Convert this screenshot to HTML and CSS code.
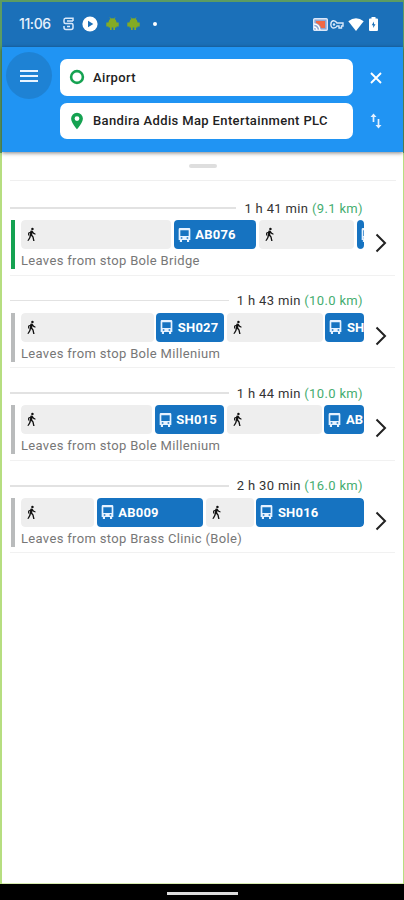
FILE: index.html
```html
<!DOCTYPE html>
<html lang="en">
<head>
<meta charset="utf-8">
<meta name="viewport" content="width=device-width, initial-scale=1">
<title>Routes</title>
<link rel="stylesheet" href="styles.css">
</head>
<body>
<svg class="defs" aria-hidden="true">
  <symbol id="walk" viewBox="0 0 24 24"><path d="M13.500 5.200a2 2 0 1 0 0-4 2 2 0 0 0 0 4zM10 7.500L6.500 9v4.500h1.800V10.200l1.500-.6-1.500 7-3 5.400h2.300l2.800-5 .8-3 2.200 2.500 1.300 6h2.200l-1.500-7-2.300-3 .6-3.200 1.200 1.700 3.400 1.200v-2l-2.400-1-2-2.700q-1.400-1.600-3.600-.5z"/></symbol>
  <symbol id="bus" viewBox="0 0 14 15"><path fill-rule="evenodd" d="M2 0h10Q13.300 0 13.300 1.500V13H12v2H9.700v-2H4.300v2H2v-2H.7V1.500Q.7 0 2 0zM2.500 2.500V8.500h9V2.500zM3 10v1.500h1.700V10zM9.300 10v1.500H11V10z"/></symbol>
  <symbol id="android" viewBox="0 0 13 14"><path d="M2.500 5Q3 2.700 4.300 2L3.500.5l.5-.2.900 1.300q1.600-.5 3.200 0L9 .3l.5.2L8.700 2Q10 2.700 10.500 5v.5h2.200v4h-2.200v1H9V13H7.300v-2.500H5.700V13H4v-2.500H2.500v-1H.3v-4h2.200z"/></symbol>
</svg>
<div class="phone">
  <div class="status">
    <span class="clock">11:06</span>
    <svg class="s-icon" width="11" height="14" viewBox="0 0 11 14"><path d="M10 4V1.200H2.500Q1 1.200 1 3v2Q1 6.500 2.500 6.500h6Q10 6.500 10 8v2.500q0 2-2 2H3q-2 0-2-2V9M4 4h6M4 9.500h3" fill="none" stroke="#d9e8fa" stroke-width="1.500"/></svg>
    <svg class="play" width="16" height="16" viewBox="0 0 16 16"><circle cx="8" cy="8" r="7.600" fill="#fff"/><path d="M6 4.700v6.600L11.300 8z" fill="#1b70b9"/></svg>
    <svg class="droid" width="13" height="14"><use href="#android"/></svg>
    <svg class="droid second" width="13" height="14"><use href="#android"/></svg>
    <span class="dot"></span>
    <svg class="cast" width="15" height="13" viewBox="0 0 15 13"><rect x=".7" y=".7" width="13.600" height="11.600" rx="1" fill="#8ca6d4" stroke="#dce7f8" stroke-width="1.400"/><path d="M3 3h9v7H8Q7 6 3 5z" fill="#ef6845"/><path d="M1 6q5 0 6 6M1 9q2.500 0 3 3" fill="none" stroke="#fff" stroke-width="1.300"/></svg>
    <svg class="key" width="14" height="9" viewBox="0 0 14 9"><path d="M7 3Q5.500.7 3.500.8 1 1 .8 4.500 1 8 3.800 8 6 8 7 6h2v2h2.500V6H13V3z" fill="none" stroke="#d9e8fa" stroke-width="1.400"/><circle cx="4" cy="4.500" r="1.200" fill="#d9e8fa"/></svg>
    <svg class="wifi" width="16" height="13" viewBox="0 0 16 13"><path d="M.3 3.200Q8-2.600 15.700 3.200L8 13z" fill="#fff"/></svg>
    <svg class="battery" width="9" height="14" viewBox="0 0 9 14"><path d="M2.500 0h4v1.500H8q1 0 1 1v10.500q0 1-1 1H1q-1 0-1-1V2.500q0-1 1-1h1.500z" fill="#fff"/><path d="M5 4.500L2.700 8.300h1.500V11l2.300-3.700H5z" fill="#1b70b9"/></svg>
  </div>
  <header class="search">
    <button class="menu" aria-label="Menu"><span></span><span></span><span></span></button>
    <div class="fields">
      <div class="field">
        <svg width="16" height="16" viewBox="0 0 16 16"><circle cx="8" cy="8" r="5.900" fill="none" stroke="#15a251" stroke-width="2.600"/></svg>
        <span class="from">Airport</span>
      </div>
      <div class="field">
        <svg width="16" height="18" viewBox="0 0 16 18"><path fill-rule="evenodd" d="M8 .7a5.900 5.900 0 0 0-5.900 5.900C2.100 11 8 17.300 8 17.300S13.900 11 13.900 6.600A5.900 5.900 0 0 0 8 .7zm0 3.500a2.400 2.400 0 1 1 0 4.800 2.400 2.400 0 0 1 0-4.800z" fill="#15a251"/></svg>
        <span class="to">Bandira Addis Map Entertainment PLC</span>
      </div>
    </div>
    <div class="actions">
      <svg width="14" height="14" viewBox="0 0 14 14"><path d="M2 2l10 10M12 2L2 12" stroke="#fff" stroke-width="1.900" fill="none"/></svg>
      <svg width="14" height="18" viewBox="0 0 14 18"><path d="M4.500 3v7M9.500 7v7" stroke="#e3f1ff" stroke-width="1.700"/><path d="M1.500 5l3-3.500 3 3.500zM6.500 13l3 3.500 3-3.500z" fill="#e3f1ff"/></svg>
    </div>
  </header>
  <div class="handle"><span></span></div>
  <main>
    <article class="route best">
      <div class="summary"><i></i><span>1 h 41 min <b>(9.1 km)</b></span></div>
      <div class="legs">
        <div class="leg walk" style="width:150px"><svg><use href="#walk"/></svg></div>
        <div class="leg bus" style="width:82px"><svg><use href="#bus"/></svg><span>AB076</span></div>
        <div class="leg walk" style="width:95.500px"><svg><use href="#walk"/></svg></div>
        <div class="leg bus" style="width:80px"><svg><use href="#bus"/></svg></div>
      </div>
      <p class="stop">Leaves from stop Bole Bridge</p>
      <svg class="chevron" viewBox="0 0 12 20"><path d="M1.500 1.500L10 10l-8.500 8.500"/></svg>
    </article>
    <article class="route">
      <div class="summary"><i></i><span>1 h 43 min <b>(10.0 km)</b></span></div>
      <div class="legs">
        <div class="leg walk" style="width:132.500px"><svg><use href="#walk"/></svg></div>
        <div class="leg bus" style="width:67.500px"><svg><use href="#bus"/></svg><span>SH027</span></div>
        <div class="leg walk" style="width:96px"><svg><use href="#walk"/></svg></div>
        <div class="leg bus" style="width:80px"><svg><use href="#bus"/></svg><span>SH</span></div>
      </div>
      <p class="stop">Leaves from stop Bole Millenium</p>
      <svg class="chevron" viewBox="0 0 12 20"><path d="M1.500 1.500L10 10l-8.500 8.500"/></svg>
    </article>
    <article class="route">
      <div class="summary"><i></i><span>1 h 44 min <b>(10.0 km)</b></span></div>
      <div class="legs">
        <div class="leg walk" style="width:131px"><svg><use href="#walk"/></svg></div>
        <div class="leg bus" style="width:69px"><svg><use href="#bus"/></svg><span>SH015</span></div>
        <div class="leg walk" style="width:95px"><svg><use href="#walk"/></svg></div>
        <div class="leg bus" style="width:80px"><svg><use href="#bus"/></svg><span>AB</span></div>
      </div>
      <p class="stop">Leaves from stop Bole Millenium</p>
      <svg class="chevron" viewBox="0 0 12 20"><path d="M1.500 1.500L10 10l-8.500 8.500"/></svg>
    </article>
    <article class="route">
      <div class="summary"><i></i><span>2 h 30 min <b>(16.0 km)</b></span></div>
      <div class="legs">
        <div class="leg walk" style="width:73px"><svg><use href="#walk"/></svg></div>
        <div class="leg bus" style="width:106px"><svg><use href="#bus"/></svg><span>AB009</span></div>
        <div class="leg walk" style="width:48px"><svg><use href="#walk"/></svg></div>
        <div class="leg bus" style="width:108px"><svg><use href="#bus"/></svg><span>SH016</span></div>
      </div>
      <p class="stop">Leaves from stop Brass Clinic (Bole)</p>
      <svg class="chevron" viewBox="0 0 12 20"><path d="M1.500 1.500L10 10l-8.500 8.500"/></svg>
    </article>
  </main>
  <footer><span></span></footer>
</div>
</body>
</html>
```
FILE: styles.css
```css
* { box-sizing: border-box; }
body { margin: 0; font-family: Roboto, "Liberation Sans", sans-serif; }
svg { display: block; flex: none; }
.defs { position: absolute; width: 0; height: 0; }
.phone {
  width: 404px; height: 900px; overflow: hidden;
  display: flex; flex-direction: column;
  background: linear-gradient(#5c9c62 0 153px, #b6de80 153px);
}
.status {
  height: 45px; margin: 2px 1px 0 2px; padding: 0 25px 1px 17px; flex: none;
  display: flex; align-items: center; background: #1b70b9; color: #e6f0fc;
}
.clock { width: 44px; font: 500 14px/16px Inter, Roboto, sans-serif; letter-spacing: -.4px; }
.play { margin-left: 8px; }
.droid { margin-left: 8px; fill: #83ab25; }
.droid.second { margin-left: 8px; }
.dot { width: 4px; height: 4px; margin-left: 13px; border-radius: 50%; background: #fff; }
.cast { margin-left: auto; }
.key { margin-left: 2px; }
.wifi { margin-left: 4px; }
.battery { margin-left: 5px; }
.search {
  position: relative; flex: none; height: 105px; margin: 0 1px 0 2px;
  display: flex; background: #2094f3; box-shadow: 0 1px 4px rgba(0,0,0,.5);
}
.menu {
  width: 46px; height: 47px; margin: 5px 0 0 4px; padding: 0; border: 0; border-radius: 50%;
  background: #1e82d4; display: flex; flex-direction: column; align-items: center; justify-content: center; gap: 3px;
}
.menu span { width: 18px; height: 2px; background: #e8f4ff; }
.fields { width: 293px; margin: 12px 0 0 8px; display: flex; flex-direction: column; gap: 7px; }
.field {
  height: 36.500px; padding-left: 9px; border-radius: 7px; background: #fff;
  display: flex; align-items: center; gap: 8px; color: #222; font-size: 13px; font-weight: 500; white-space: nowrap;
}
.from { letter-spacing: .35px; }
.to { letter-spacing: .36px; }
.actions { margin: 24px 0 0 16px; display: flex; flex-direction: column; gap: 27px; }
.handle {
  flex: none; height: 29px; margin: 0 1px 0 2px; padding-top: 12px;
  background: linear-gradient(#efefef, #efefef) 50% 100% / 386px 1px no-repeat #fff;
}
.handle span { display: block; width: 28px; height: 4px; margin: 0 auto; border-radius: 2px; background: #dedede; }
main { flex: 1; margin: 0 1px 0 2px; padding: 2px 8px 0 8px; background: #fff; border-bottom: 1px solid #d8edb0; }
.route {
  height: 92.600px; padding-top: 17px; border-bottom: 1px solid #f1f1f1;
  display: grid; grid-template-columns: 11px 343px 1fr; grid-template-rows: 20px 30px 21px; align-content: start;
}
.route::before {
  content: ""; grid-column: 1; grid-row: 2 / 4; width: 4.500px; height: 49px; margin-left: .5px; background: #b9bbbc;
}
.route.best::before { background: #15a251; }
.summary {
  grid-column: 1 / 3; grid-row: 1; height: 16px; margin-right: 1px;
  display: flex; align-items: center; gap: 8px; font-size: 13px; color: #333; letter-spacing: .35px;
}
.summary i { flex: 1; height: 1.500px; background: #e2e2e2; }
.summary b { font-weight: 400; color: #45ad70; }
.legs { grid-column: 2; grid-row: 2; height: 29px; display: flex; gap: 2.800px; overflow: hidden; border-radius: 4px; }
.leg { flex: none; height: 29px; border-radius: 4px; display: flex; align-items: center; }
.walk { background: #eee; padding-left: 3px; }
.walk svg { width: 15px; height: 15px; fill: #111; }
.bus { background: #1673c1; color: #fff; padding-left: 4px; gap: 4.500px; font-size: 13px; font-weight: 700; letter-spacing: .2px; }
.bus svg { width: 13px; height: 14px; fill: #e6f2ff; }
.stop { grid-column: 2; grid-row: 3; margin: 2px 0 0; font-size: 13px; line-height: 18px; color: #777; letter-spacing: .33px; white-space: nowrap; }
.chevron { grid-column: 3; grid-row: 2 / 4; width: 12px; height: 20px; margin: 13px 0 0 11px; }
.chevron path { fill: none; stroke: #222; stroke-width: 2; }
footer { flex: none; height: 16px; background: #000; display: flex; justify-content: center; padding-top: 8px; }
footer span { width: 71px; height: 3px; background: #ddd; }
```
